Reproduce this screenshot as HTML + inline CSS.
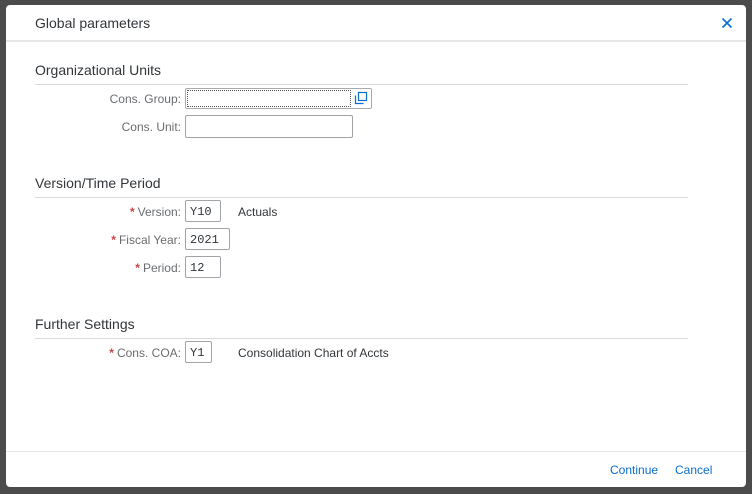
<!DOCTYPE html>
<html><head><style>
*{margin:0;padding:0;box-sizing:border-box}
body{width:752px;height:494px;background:#4b4b4b;position:relative;overflow:hidden;font-family:"Liberation Sans",sans-serif}
.dlg{position:absolute;left:6px;top:5px;width:740px;height:482px;background:#fff;border-radius:4px}
.a{position:absolute}
.t{font-size:14px;color:#32363a}
.hl{position:absolute;height:1px;background:#d9d9d9}
.lbl{position:absolute;font-size:12px;color:#6a6d70;text-align:right;white-space:nowrap}
.lbl b{color:#d04343;font-weight:bold;margin-right:3px}
.inp{position:absolute;border:1px solid #a0a4a8;border-radius:2px;background:#fff;font-family:"Liberation Mono",monospace;font-size:12px;color:#32363a;padding:4px 0 0 4px}
.desc{position:absolute;font-size:12px;color:#32363a}
</style></head><body>
<div class="dlg"></div>
<div class="a t" style="left:35px;top:15px;font-size:14px">Global parameters</div>
<svg class="a" style="left:721px;top:17px" width="12" height="12"><path d="M1.5 1.5L10.5 10.5M10.5 1.5L1.5 10.5" stroke="#0a6ed1" stroke-width="1.6"/></svg>
<div class="hl" style="left:6px;width:740px;top:40px;height:2px;background:#e5e5e5"></div>

<div class="a t" style="left:35px;top:62px">Organizational Units</div>
<div class="hl" style="left:35px;width:653px;top:84px"></div>
<div class="lbl" style="top:92px;right:571px">Cons. Group:</div>
<div class="inp" style="left:185px;top:88px;width:187px;height:21px;border-color:#a8abae"></div>
<div class="a" style="left:187px;top:90px;width:164px;height:17px;border:1px dotted #555"></div>
<svg class="a" style="left:354px;top:91px" width="14" height="14"><path d="M1.5 4.5v8h8" fill="none" stroke="#0a6ed1" stroke-width="1.2"/><rect x="4.5" y="1.5" width="8" height="8" fill="none" stroke="#0a6ed1" stroke-width="1.2"/></svg>
<div class="lbl" style="top:120px;right:571px">Cons. Unit:</div>
<div class="inp" style="left:185px;top:115px;width:168px;height:23px"></div>

<div class="a t" style="left:35px;top:175px">Version/Time Period</div>
<div class="hl" style="left:35px;width:653px;top:197px"></div>
<div class="lbl" style="top:205px;right:571px"><b>*</b>Version:</div>
<div class="inp" style="left:185px;top:200px;width:36px;height:22px">Y10</div>
<div class="desc" style="left:238px;top:205px">Actuals</div>
<div class="lbl" style="top:233px;right:571px"><b>*</b>Fiscal Year:</div>
<div class="inp" style="left:185px;top:228px;width:45px;height:22px">2021</div>
<div class="lbl" style="top:261px;right:571px"><b>*</b>Period:</div>
<div class="inp" style="left:185px;top:256px;width:36px;height:22px">12</div>

<div class="a t" style="left:35px;top:316px">Further Settings</div>
<div class="hl" style="left:35px;width:653px;top:338px"></div>
<div class="lbl" style="top:346px;right:571px"><b>*</b>Cons. COA:</div>
<div class="inp" style="left:185px;top:341px;width:27px;height:22px">Y1</div>
<div class="desc" style="left:238px;top:346px">Consolidation Chart of Accts</div>

<div class="hl" style="left:6px;width:740px;top:451px;background:#e5e5e5"></div>
<div class="a" style="left:610px;top:463px;font-size:12px;color:#0a6ed1">Continue</div>
<div class="a" style="left:675px;top:463px;font-size:12px;color:#0a6ed1">Cancel</div>
</body></html>
